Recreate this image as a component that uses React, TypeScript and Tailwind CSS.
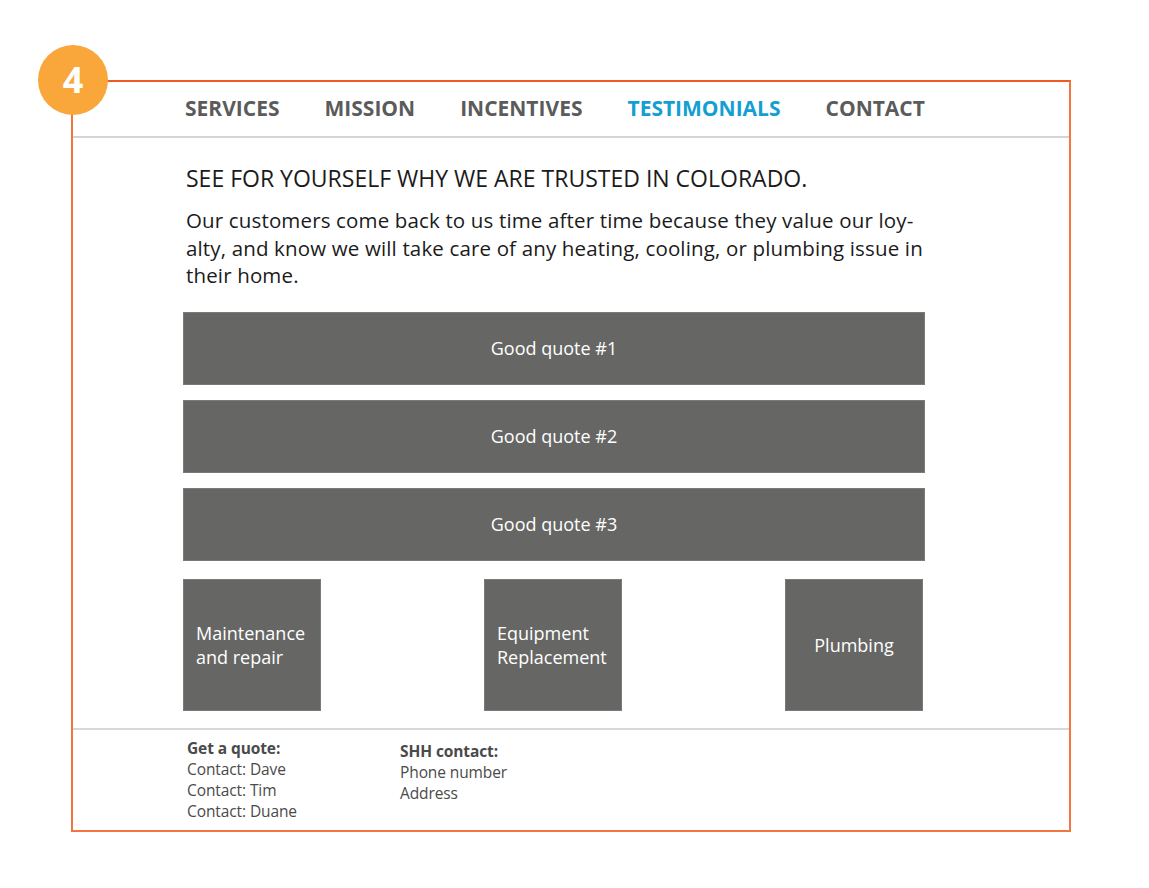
const navItems = ['SERVICES', 'MISSION', 'INCENTIVES', 'TESTIMONIALS', 'CONTACT'];
const quotes = ['Good quote #1', 'Good quote #2', 'Good quote #3'];

function QuoteBar({ text }: { text: string }) {
  return (
    <div className="flex h-[73px] w-[742px] items-center justify-center border border-[#7a7b78] bg-[#666764] text-[18px] font-medium text-white">
      {text}
    </div>
  );
}

function ServiceBox({ lines, center }: { lines: string[]; center?: boolean }) {
  return (
    <div
      className={
        center
          ? 'flex h-[132px] w-[138px] items-center justify-center border border-[#7a7b78] bg-[#666764] text-[18px] font-medium leading-[24px] text-white'
          : 'flex h-[132px] w-[138px] flex-col justify-center border border-[#7a7b78] bg-[#666764] pl-[12px] text-[18px] font-medium leading-[24px] text-white'
      }
    >
      {lines.map((l) => (
        <span key={l}>{l}</span>
      ))}
    </div>
  );
}

export default function App() {
  return (
    <div className="relative h-[888px] w-[1149px] bg-white pt-[80px] pl-[71px]" style={{ fontFamily: '"Open Sans", "Liberation Sans", sans-serif' }}>
      <div className="flex h-[752px] w-[1000px] flex-col border-2 border-[#f37640] border-t-[#f05a22]">
        <nav className="flex h-[56px] items-center gap-[45px] border-b-2 border-[#d4d4d4] pl-[112px] text-[21px] font-bold text-[#5b5b5b]">
          {navItems.map((n) => (
            <span key={n} className={n === 'TESTIMONIALS' ? 'text-[#139fd2]' : ''}>
              {n}
            </span>
          ))}
        </nav>

        <div className="flex flex-1 flex-col pl-[110px]">
          <h1 className="mt-[25px] ml-[3px] text-[23px] leading-[30px] text-[#1b1b1b]">
            SEE FOR YOURSELF WHY WE ARE TRUSTED IN COLORADO.
          </h1>
          <p className="mt-[14px] ml-[3px] text-[20.5px] leading-[27.5px] tracking-[0.15px] text-[#1b1b1b]">
            Our customers come back to us time after time because they value our loy-
            <br />
            alty, and know we will take care of any heating, cooling, or plumbing issue in
            <br />
            their home.
          </p>

          <div className="mt-[22px] flex flex-col gap-[15px]">
            {quotes.map((q) => (
              <QuoteBar key={q} text={q} />
            ))}
          </div>

          <div className="mt-[18px] flex w-[740px] justify-between">
            <ServiceBox lines={['Maintenance', 'and repair']} />
            <ServiceBox lines={['Equipment', 'Replacement']} />
            <ServiceBox lines={['Plumbing']} center />
          </div>
        </div>

        <footer className="flex h-[102px] gap-[100px] border-t-2 border-[#d8d8d8] pt-[8px] pl-[114px] text-[15.5px] leading-[21px] tracking-[-0.1px] text-[#4a4a4a]">
          <div className="flex w-[113px] flex-col">
            <span className="font-bold">Get a quote:</span>
            <span>Contact: Dave</span>
            <span>Contact: Tim</span>
            <span>Contact: Duane</span>
          </div>
          <div className="flex flex-col pt-[3px]">
            <span className="font-bold">SHH contact:</span>
            <span>Phone number</span>
            <span>Address</span>
          </div>
        </footer>
      </div>

      <div className="absolute top-[45px] left-[38px] flex h-[70px] w-[70px] items-center justify-center rounded-full bg-[#f9a73a] text-[36px] font-bold text-white">
        4
      </div>
    </div>
  );
}
